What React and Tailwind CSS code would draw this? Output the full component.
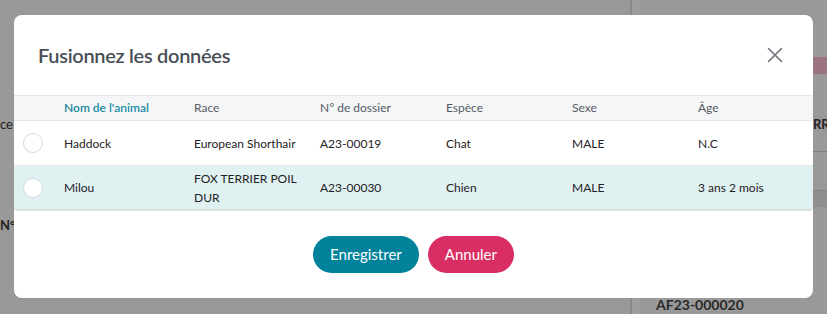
import React from "react";

const font = { fontFamily: "Lato, 'Noto Sans', sans-serif" };

const cols = ["Nom de l'animal", "Race", "N° de dossier", "Espèce", "Sexe", "Âge"];

const rows = [
  { nom: "Haddock", race: "European Shorthair", dossier: "A23-00019", espece: "Chat", sexe: "MALE", age: "N.C" },
  { nom: "Milou", race: "FOX TERRIER POIL DUR", dossier: "A23-00030", espece: "Chien", sexe: "MALE", age: "3 ans 2 mois", selected: true },
];

function Radio() {
  return <span className="block w-[20px] h-[20px] rounded-full border border-[#d5d9de] bg-white" />;
}

function Backdrop() {
  return (
    <>
      <div className="absolute left-[630px] top-0 w-[2px] h-full bg-[#8a8a8c]" />
      <div className="absolute left-[632px] top-0 w-[8px] h-full bg-[#9d9d9d]" />
      <div className="absolute left-[813px] top-[57px] w-[14px] h-[17px] bg-[#9a7480]" />
      <div className="absolute left-[813px] top-[151px] w-[14px] h-px bg-[#7e7e7e]" />
      <div className="absolute left-[813px] top-[190px] w-[14px] h-[17px] bg-[#8e8e8e] border-t border-[#808080]" />
      <span className="absolute left-0 top-[115px] text-[13px] text-[#222]">ce</span>
      <span className="absolute left-[813px] top-[115px] w-[14px] overflow-hidden whitespace-nowrap text-[13px] font-bold text-[#222]">RR</span>
      <span className="absolute left-0 top-[216px] w-[14px] overflow-hidden whitespace-nowrap text-[13px] font-bold text-[#222]">
        N° <span className="text-[#1e3a8a]">d</span>
      </span>
      <span className="absolute left-[656px] top-[294px] text-[14px] font-bold text-[#2a2a2a]">AF23-000020</span>
    </>
  );
}

export default function App() {
  return (
    <div className="relative w-[827px] h-[314px] bg-[#999999] overflow-hidden" style={font}>
      <Backdrop />
      <div className="absolute left-[14px] top-[15px] w-[799px] h-[283px] bg-white rounded-[8px] flex flex-col">
        <div className="shrink-0 flex items-center justify-between h-[80px] pl-[24px] pr-[30px]">
          <h2 className="text-[20px] font-semibold text-[#484e55] tracking-[-0.3px]">Fusionnez les données</h2>
          <svg width="16" height="16" viewBox="0 0 16 16" className="text-[#6b7178]">
            <path d="M1.5 1.5 L14.5 14.5 M14.5 1.5 L1.5 14.5" stroke="currentColor" strokeWidth="1.6" strokeLinecap="round" />
          </svg>
        </div>
        <div className="shrink-0 grid grid-cols-[50px_130px_126px_126px_126px_126px_1fr] text-[12px]">
          <div className="h-[26px] bg-[#f5f6f8] border-t border-b border-[#e3e6ea]" />
          {cols.map((c, i) => (
            <div
              key={c}
              className={`h-[26px] flex items-center bg-[#f5f6f8] border-t border-b border-[#e3e6ea] ${
                i === 0 ? "text-[#1b8ba2] font-semibold" : "text-[#555b62]"
              }`}
            >
              {c}
            </div>
          ))}
          {rows.map((r) => {
            const bg = r.selected ? "bg-[#e0f1f1] border-b-2 border-[#d8e0e2]" : "bg-white border-b border-[#e3e6ea]";
            const cells = [r.nom, r.race, r.dossier, r.espece, r.sexe, r.age];
            return (
              <React.Fragment key={r.nom}>
                <div className={`h-[45px] flex items-center pl-[9px] ${bg} ${r.selected ? "rounded-bl-[4px]" : ""}`}>
                  <Radio />
                </div>
                {cells.map((v, i) => (
                  <div
                    key={i}
                    className={`h-[45px] flex items-center text-[#1f2226] leading-[19px] ${bg} ${i === 1 ? "pr-[16px]" : ""} ${
                      r.selected && i === 5 ? "rounded-br-[4px]" : ""
                    }`}
                  >
                    {v}
                  </div>
                ))}
              </React.Fragment>
            );
          })}
        </div>
        <div className="flex justify-center gap-[9px] pt-[25px]">
          <button className="h-[37px] px-[17px] rounded-full bg-[#00829b] text-white text-[15px]">Enregistrer</button>
          <button className="h-[37px] px-[17px] rounded-full bg-[#d82e63] text-white text-[15px]">Annuler</button>
        </div>
      </div>
    </div>
  );
}
